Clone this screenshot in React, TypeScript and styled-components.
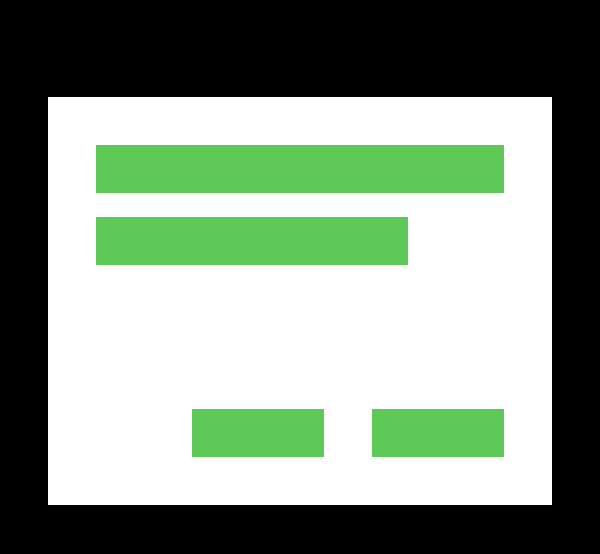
import React from "react";
import styled, { createGlobalStyle } from "styled-components";

const Global = createGlobalStyle`
  html, body { margin: 0; padding: 0; background: #000; }
  body { font-family: "Liberation Sans", Arial, sans-serif; }
`;

const Screen = styled.div`
  width: 600px;
  height: 554px;
  box-sizing: border-box;
  padding: 97px 48px 49px 48px;
  background: #000;
  display: flex;
`;

const Dialog = styled.div`
  flex: 1;
  background: #fff;
  box-sizing: border-box;
  padding: 48px;
  display: flex;
  flex-direction: column;
  gap: 24px;
`;

const Line = styled.div<{ $w: number }>`
  width: ${(p) => p.$w}px;
  height: 48px;
  background: #5ec957;
`;

const Actions = styled.div`
  margin-top: auto;
  display: flex;
  justify-content: flex-end;
  gap: 48px;
`;

const Button = styled.div`
  width: 132px;
  height: 48px;
  background: #5ec957;
`;

export default function App() {
  return (
    <>
      <Global />
      <Screen>
        <Dialog>
          <Line $w={408} />
          <Line $w={312} />
          <Actions>
            <Button />
            <Button />
          </Actions>
        </Dialog>
      </Screen>
    </>
  );
}
